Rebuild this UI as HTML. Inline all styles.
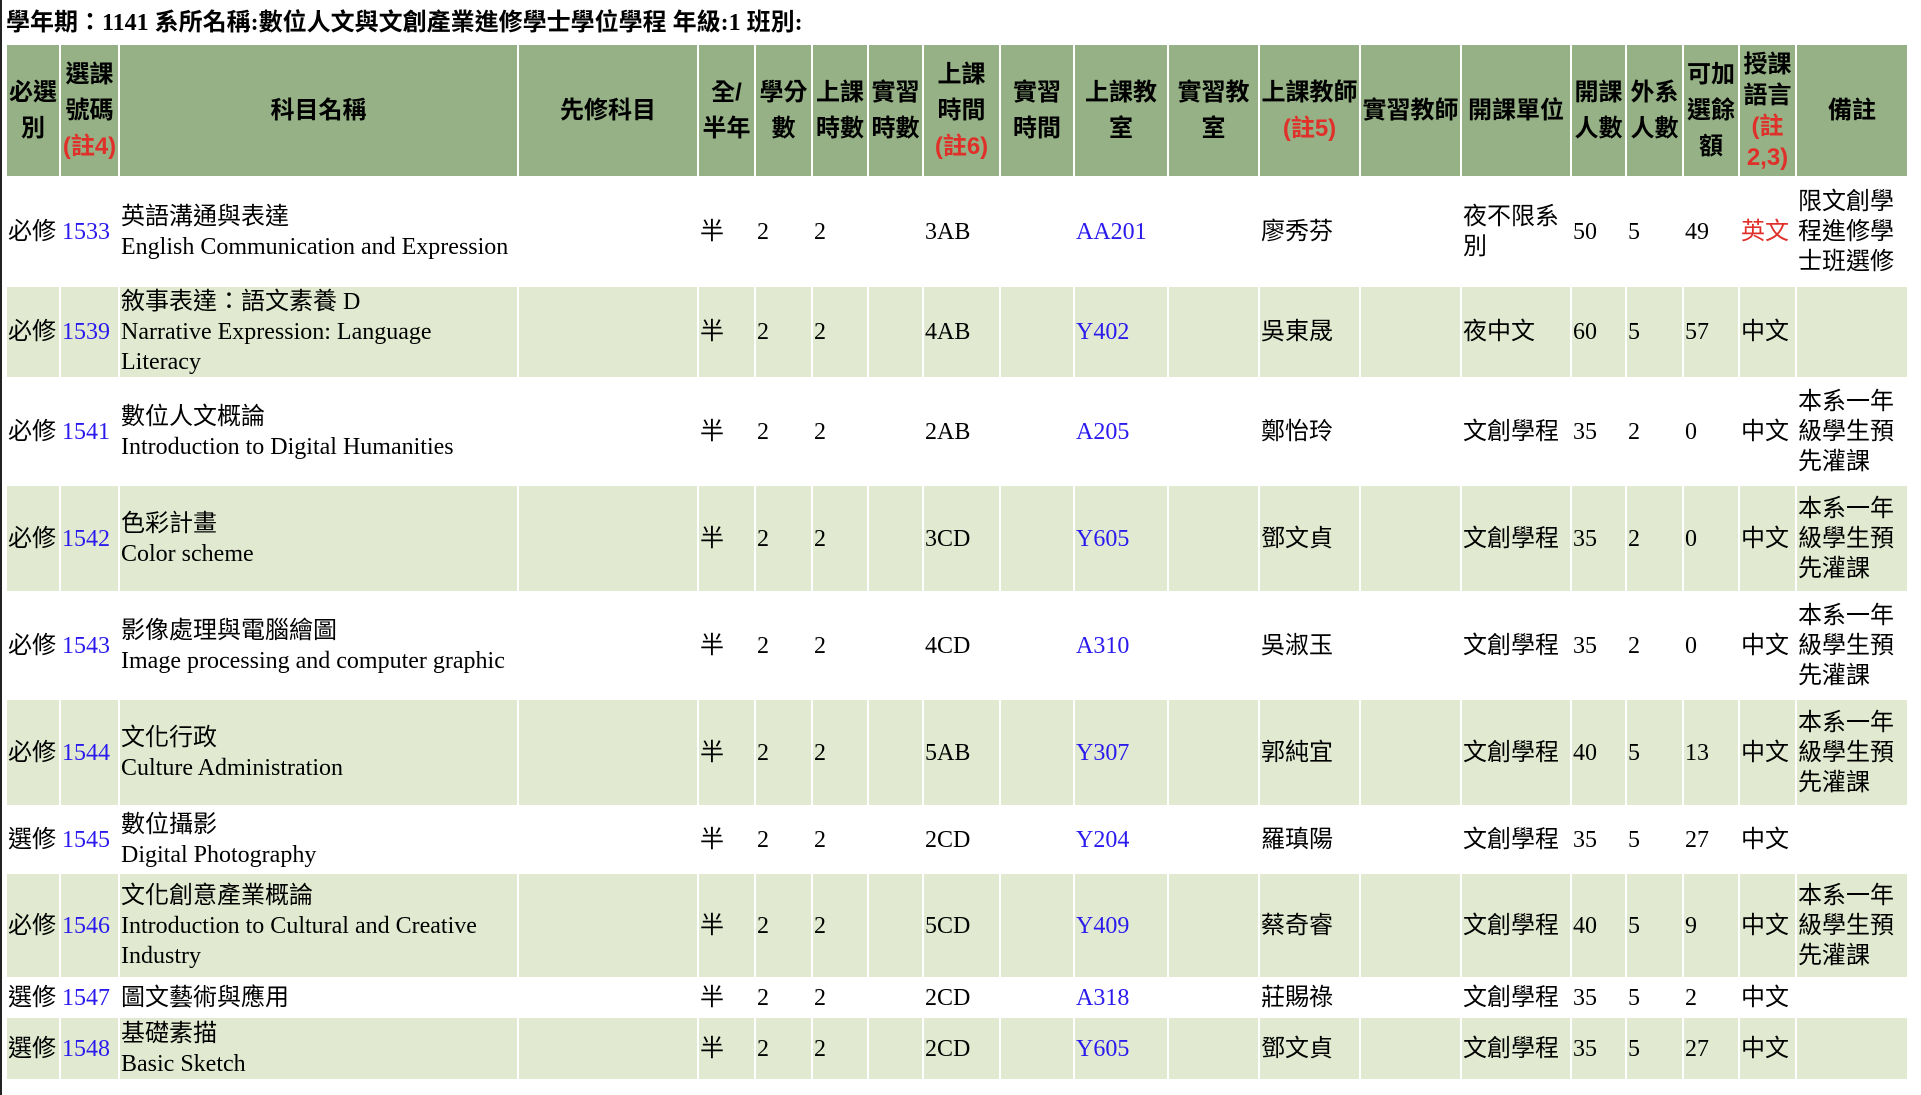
<!DOCTYPE html>
<html><head><meta charset="utf-8"><style>
html,body{margin:0;padding:0;background:#fff;width:1921px;height:1095px;overflow:hidden;}
body{font-family:"Liberation Serif","Noto Sans CJK TC","Noto Sans CJK SC",serif;font-size:24px;color:#000;position:relative;}
.bar{position:absolute;left:0;top:0;width:2px;height:1095px;background:#222;}
h1{position:absolute;left:6px;top:8px;margin:0;font-size:24px;font-weight:bold;line-height:30px;white-space:nowrap;}
table{position:absolute;left:5px;top:43px;border-collapse:collapse;table-layout:fixed;width:1902px;}
td,th{border:2px solid #fff;padding:0 1px;vertical-align:middle;text-align:left;line-height:30px;overflow:hidden;}
th{background:#95b185;text-align:center;font-weight:bold;font-family:"Liberation Sans","Noto Sans CJK TC",sans-serif;line-height:36px;}
tr.e td{background:#e1ead0;}
a{color:#2a1aee;text-decoration:none;}
.r{color:#e0302a;}
</style></head><body>
<div class="bar"></div>
<h1>學年期：1141 系所名稱:數位人文與文創產業進修學士學位學程 年級:1 班別:</h1>
<table>
<colgroup><col style="width:54px"><col style="width:59px"><col style="width:399px"><col style="width:180px"><col style="width:57px"><col style="width:57px"><col style="width:56px"><col style="width:55px"><col style="width:77px"><col style="width:74px"><col style="width:94px"><col style="width:91px"><col style="width:101px"><col style="width:101px"><col style="width:110px"><col style="width:55px"><col style="width:57px"><col style="width:56px"><col style="width:57px"><col style="width:112px"></colgroup>
<tr style="height:133px"><th>必選<br>別</th><th>選課<br>號碼<br><span class="r">(註4)</span></th><th>科目名稱</th><th>先修科目</th><th>全/<br>半年</th><th>學分<br>數</th><th>上課<br>時數</th><th>實習<br>時數</th><th>上課<br>時間<br><span class="r">(註6)</span></th><th>實習<br>時間</th><th>上課教<br>室</th><th>實習教<br>室</th><th>上課教師<br><span class="r">(註5)</span></th><th>實習教師</th><th>開課單位</th><th>開課<br>人數</th><th>外系<br>人數</th><th>可加<br>選餘<br>額</th><th style="line-height:31px">授課<br>語言<br><span class="r">(註<br>2,3)</span></th><th>備註</th></tr>
<tr style="height:109px"><td>必修</td><td><a>1533</a></td><td>英語溝通與表達<br>English Communication and Expression</td><td></td><td>半</td><td>2</td><td>2</td><td></td><td>3AB</td><td></td><td><a>AA201</a></td><td></td><td>廖秀芬</td><td></td><td>夜不限系<br>別</td><td>50</td><td>5</td><td>49</td><td><span class="r">英文</span></td><td>限文創學<br>程進修學<br>士班選修</td></tr>
<tr class="e" style="height:91px"><td>必修</td><td><a>1539</a></td><td>敘事表達：語文素養 D<br>Narrative Expression: Language<br>Literacy</td><td></td><td>半</td><td>2</td><td>2</td><td></td><td>4AB</td><td></td><td><a>Y402</a></td><td></td><td>吳東晟</td><td></td><td>夜中文</td><td>60</td><td>5</td><td>57</td><td>中文</td><td></td></tr>
<tr style="height:107px"><td>必修</td><td><a>1541</a></td><td>數位人文概論<br>Introduction to Digital Humanities</td><td></td><td>半</td><td>2</td><td>2</td><td></td><td>2AB</td><td></td><td><a>A205</a></td><td></td><td>鄭怡玲</td><td></td><td>文創學程</td><td>35</td><td>2</td><td>0</td><td>中文</td><td>本系一年<br>級學生預<br>先灌課</td></tr>
<tr class="e" style="height:107px"><td>必修</td><td><a>1542</a></td><td>色彩計畫<br>Color scheme</td><td></td><td>半</td><td>2</td><td>2</td><td></td><td>3CD</td><td></td><td><a>Y605</a></td><td></td><td>鄧文貞</td><td></td><td>文創學程</td><td>35</td><td>2</td><td>0</td><td>中文</td><td>本系一年<br>級學生預<br>先灌課</td></tr>
<tr style="height:107px"><td>必修</td><td><a>1543</a></td><td>影像處理與電腦繪圖<br>Image processing and computer graphic</td><td></td><td>半</td><td>2</td><td>2</td><td></td><td>4CD</td><td></td><td><a>A310</a></td><td></td><td>吳淑玉</td><td></td><td>文創學程</td><td>35</td><td>2</td><td>0</td><td>中文</td><td>本系一年<br>級學生預<br>先灌課</td></tr>
<tr class="e" style="height:107px"><td>必修</td><td><a>1544</a></td><td>文化行政<br>Culture Administration</td><td></td><td>半</td><td>2</td><td>2</td><td></td><td>5AB</td><td></td><td><a>Y307</a></td><td></td><td>郭純宜</td><td></td><td>文創學程</td><td>40</td><td>5</td><td>13</td><td>中文</td><td>本系一年<br>級學生預<br>先灌課</td></tr>
<tr style="height:67px"><td>選修</td><td><a>1545</a></td><td>數位攝影<br>Digital Photography</td><td></td><td>半</td><td>2</td><td>2</td><td></td><td>2CD</td><td></td><td><a>Y204</a></td><td></td><td>羅瑱陽</td><td></td><td>文創學程</td><td>35</td><td>5</td><td>27</td><td>中文</td><td></td></tr>
<tr class="e" style="height:105px"><td>必修</td><td><a>1546</a></td><td>文化創意產業概論<br>Introduction to Cultural and Creative<br>Industry</td><td></td><td>半</td><td>2</td><td>2</td><td></td><td>5CD</td><td></td><td><a>Y409</a></td><td></td><td>蔡奇睿</td><td></td><td>文創學程</td><td>40</td><td>5</td><td>9</td><td>中文</td><td>本系一年<br>級學生預<br>先灌課</td></tr>
<tr style="height:39px"><td>選修</td><td><a>1547</a></td><td>圖文藝術與應用</td><td></td><td>半</td><td>2</td><td>2</td><td></td><td>2CD</td><td></td><td><a>A318</a></td><td></td><td>莊賜祿</td><td></td><td>文創學程</td><td>35</td><td>5</td><td>2</td><td>中文</td><td></td></tr>
<tr class="e" style="height:63px"><td>選修</td><td><a>1548</a></td><td>基礎素描<br>Basic Sketch</td><td></td><td>半</td><td>2</td><td>2</td><td></td><td>2CD</td><td></td><td><a>Y605</a></td><td></td><td>鄧文貞</td><td></td><td>文創學程</td><td>35</td><td>5</td><td>27</td><td>中文</td><td></td></tr>
</table>
</body></html>
